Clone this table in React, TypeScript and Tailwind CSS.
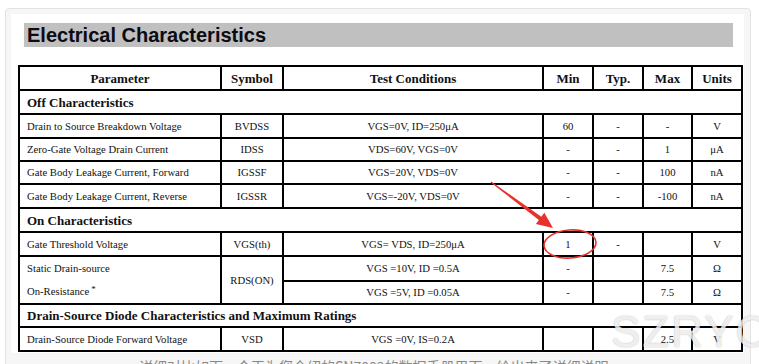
import React from "react";

const serif = { fontFamily: '"Liberation Serif", "Times New Roman", serif' };

type Row = {
  param: string;
  sym: string;
  cond: string;
  min: string;
  typ: string;
  max: string;
  unit: string;
  h: string;
};

const td = "border-2 border-black text-center leading-none p-0";
const tdL = "border-2 border-black text-left leading-none pl-[7px] pr-1";

function DataRow({ r }: { r: Row }) {
  return (
    <tr className={r.h}>
      <td className={tdL}>{r.param}</td>
      <td className={td}>{r.sym}</td>
      <td className={td}>{r.cond}</td>
      <td className={td}>{r.min}</td>
      <td className={td}>{r.typ}</td>
      <td className={td}>{r.max}</td>
      <td className={td}>{r.unit}</td>
    </tr>
  );
}

function Section({ title, h }: { title: string; h: string }) {
  return (
    <tr className={h}>
      <td colSpan={7} className="border-2 border-black text-left leading-none pl-[7px] font-bold text-[13px]">
        {title}
      </td>
    </tr>
  );
}

const off: Row[] = [
  { param: "Drain to Source Breakdown Voltage", sym: "BVDSS", cond: "VGS=0V, ID=250μA", min: "60", typ: "-", max: "-", unit: "V", h: "h-[24px]" },
  { param: "Zero-Gate Voltage Drain Current", sym: "IDSS", cond: "VDS=60V, VGS=0V", min: "-", typ: "-", max: "1", unit: "μA", h: "h-[23px]" },
  { param: "Gate Body Leakage Current, Forward", sym: "IGSSF", cond: "VGS=20V, VDS=0V", min: "-", typ: "-", max: "100", unit: "nA", h: "h-[23px]" },
  { param: "Gate Body Leakage Current, Reverse", sym: "IGSSR", cond: "VGS=-20V, VDS=0V", min: "-", typ: "-", max: "-100", unit: "nA", h: "h-[24px]" },
];

export default function App() {
  return (
    <div className="relative w-[759px] h-[364px] overflow-hidden bg-white">
      <div className="ml-[5px] mt-[8px] w-[746px] h-[400px] border border-[#e2e2e2] rounded-[4px] bg-[#f6f6f6] pl-[5px] pt-[5px]">
        <div className="w-[733px] h-[339px] bg-white pt-[9px]">
          <div className="ml-[13px] w-[709px] h-[24px] bg-[#c0c0c0] flex items-center pl-[3px]">
            <span
              className="text-[20px] font-bold leading-none text-[#0b0b14]"
              style={{ fontFamily: '"Liberation Sans", Arial, sans-serif' }}
            >
              Electrical Characteristics
            </span>
          </div>
          <div className="ml-[7px] mt-[18px]" style={serif}>
            <table className="table-fixed border-collapse w-[723px] text-[10.7px] text-[#111]">
              <colgroup>
                <col className="w-[202px]" />
                <col className="w-[62px]" />
                <col className="w-[260px]" />
                <col className="w-[50px]" />
                <col className="w-[50px]" />
                <col className="w-[49px]" />
                <col className="w-[50px]" />
              </colgroup>
              <tbody>
                <tr className="h-[24px] font-bold text-[13px]">
                  <td className={td}>Parameter</td>
                  <td className={td}>Symbol</td>
                  <td className={td}>Test Conditions</td>
                  <td className={td}>Min</td>
                  <td className={td}>Typ.</td>
                  <td className={td}>Max</td>
                  <td className={td}>Units</td>
                </tr>
                <Section title="Off Characteristics" h="h-[24px]" />
                {off.map((r) => (
                  <DataRow key={r.sym} r={r} />
                ))}
                <Section title="On Characteristics" h="h-[24px]" />
                <DataRow
                  r={{ param: "Gate Threshold Voltage", sym: "VGS(th)", cond: "VGS= VDS, ID=250μA", min: "1", typ: "-", max: "", unit: "V", h: "h-[24px]" }}
                />
                <tr className="h-[24px]">
                  <td rowSpan={2} className="border-2 border-black text-left pl-[7px] p-0 align-middle">
                    <div className="flex flex-col">
                      <div className="h-[23px] flex items-center leading-none">Static Drain-source</div>
                      <div className="h-[23px] flex items-center leading-none">
                        On-Resistance<sup className="text-[9px] ml-[2px] -top-[3px]">*</sup>
                      </div>
                    </div>
                  </td>
                  <td rowSpan={2} className={td}>RDS(ON)</td>
                  <td className={td}>VGS =10V, ID =0.5A</td>
                  <td className={td}>-</td>
                  <td className={td}></td>
                  <td className={td}>7.5</td>
                  <td className={td}>Ω</td>
                </tr>
                <tr className="h-[23px]">
                  <td className={td}>VGS =5V, ID =0.05A</td>
                  <td className={td}>-</td>
                  <td className={td}></td>
                  <td className={td}>7.5</td>
                  <td className={td}>Ω</td>
                </tr>
                <Section title="Drain-Source Diode Characteristics and Maximum Ratings" h="h-[23px]" />
                <DataRow
                  r={{ param: "Drain-Source Diode Forward Voltage", sym: "VSD", cond: "VGS =0V, IS=0.2A", min: "", typ: "", max: "2.5", unit: "V", h: "h-[24px]" }}
                />
              </tbody>
            </table>
          </div>
        </div>
        <div
          className="ml-[128px] mt-[6px] text-[14px] leading-none text-[#888] whitespace-nowrap"
          style={{ fontFamily: '"Noto Sans CJK SC", "Noto Sans", sans-serif' }}
        >
          详细对比如下，今天为您介绍的SN7002的数据手册里面，给出来了详细说明
        </div>
      </div>

      <svg className="absolute left-0 top-0 pointer-events-none" width="759" height="364" viewBox="0 0 759 364">
        <polygon
          points="491.3,181.6 541.3,216.8 544.3,212.8 553,228 535.9,224.1 538.9,220.1 490.7,182.4"
          fill="#e8312b"
        />
        <ellipse cx="570" cy="244" rx="26" ry="14" fill="none" stroke="#e8312b" strokeWidth="1.6" transform="rotate(-4 570 244)" />
      </svg>

      <div
        className="absolute left-[611px] top-[310px] text-[44px] leading-none text-white/80 tracking-[2px] pointer-events-none [text-shadow:0_0_1.5px_rgba(0,0,0,0.35)]"
        style={{ fontFamily: '"Liberation Sans", Arial, sans-serif' }}
      >
        SZRYC
      </div>
    </div>
  );
}
